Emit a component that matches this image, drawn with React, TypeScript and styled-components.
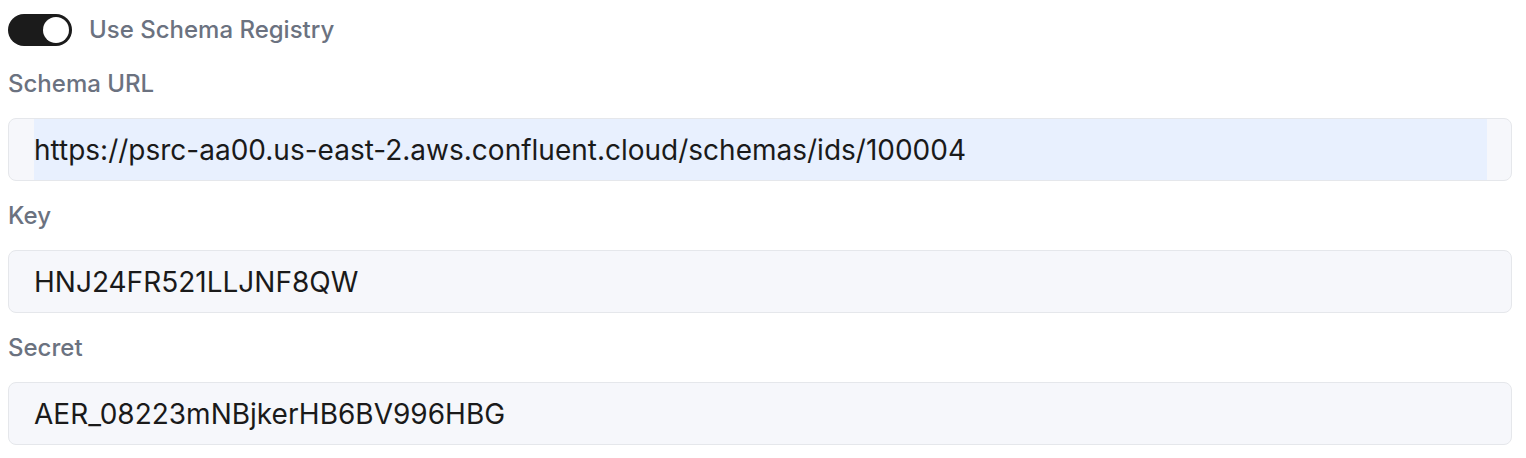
import React from 'react'
import styled, { createGlobalStyle } from 'styled-components'

const GlobalStyle = createGlobalStyle`
  body {
    margin: 0;
    background: #ffffff;
    font-family: Inter, "Noto Sans", sans-serif;
  }
`;

const Form = styled.div`
  display: flex;
  flex-direction: column;
  padding: 14px 14px 0 8px;
`;

const ToggleRow = styled.label`
  display: flex;
  align-items: center;
  gap: 17px;
  margin-bottom: 22px;
`;

const Track = styled.span<{ on: boolean }>`
  display: flex;
  align-items: center;
  justify-content: ${(p) => (p.on ? 'flex-end' : 'flex-start')};
  width: 64px;
  height: 32px;
  padding: 3px;
  box-sizing: border-box;
  border-radius: 16px;
  background: ${(p) => (p.on ? '#1b1b1b' : '#d1d5db')};
`;

const Knob = styled.span`
  width: 26px;
  height: 26px;
  border-radius: 50%;
  background: #ffffff;
`;

const ToggleText = styled.span`
  font-size: 24px;
  font-weight: 500;
  line-height: 32px;
  color: #6b7280;
`;

const Field = styled.div`
  display: flex;
  flex-direction: column;
  margin-bottom: 19px;
`;

const Label = styled.div`
  font-size: 24px;
  font-weight: 500;
  line-height: 32px;
  color: #6b7280;
  margin-bottom: 18px;
`;

const Box = styled.div`
  display: flex;
  height: 63px;
  box-sizing: border-box;
  padding: 0 24px 0 25px;
  border: 1.5px solid #e5e7eb;
  border-radius: 8px;
  background: #f6f7fb;
`;

const Value = styled.div<{ filled?: boolean }>`
  flex: 1;
  display: flex;
  align-items: center;
  font-size: 28px;
  color: #1a1a1a;
  background: ${(p) => (p.filled ? '#e8f0fe' : 'transparent')};
`;

const fields = [
  { label: 'Schema URL', value: 'https://psrc-aa00.us-east-2.aws.confluent.cloud/schemas/ids/100004', filled: true },
  { label: 'Key', value: 'HNJ24FR521LLJNF8QW' },
  { label: 'Secret', value: 'AER_08223mNBjkerHB6BV996HBG' },
];

export default function App() {
  return (
    <>
      <GlobalStyle />
      <Form>
        <ToggleRow>
          <Track on>
            <Knob />
          </Track>
          <ToggleText>Use Schema Registry</ToggleText>
        </ToggleRow>
        {fields.map((f) => (
          <Field key={f.label}>
            <Label>{f.label}</Label>
            <Box>
              <Value filled={f.filled}>{f.value}</Value>
            </Box>
          </Field>
        ))}
      </Form>
    </>
  )
}
